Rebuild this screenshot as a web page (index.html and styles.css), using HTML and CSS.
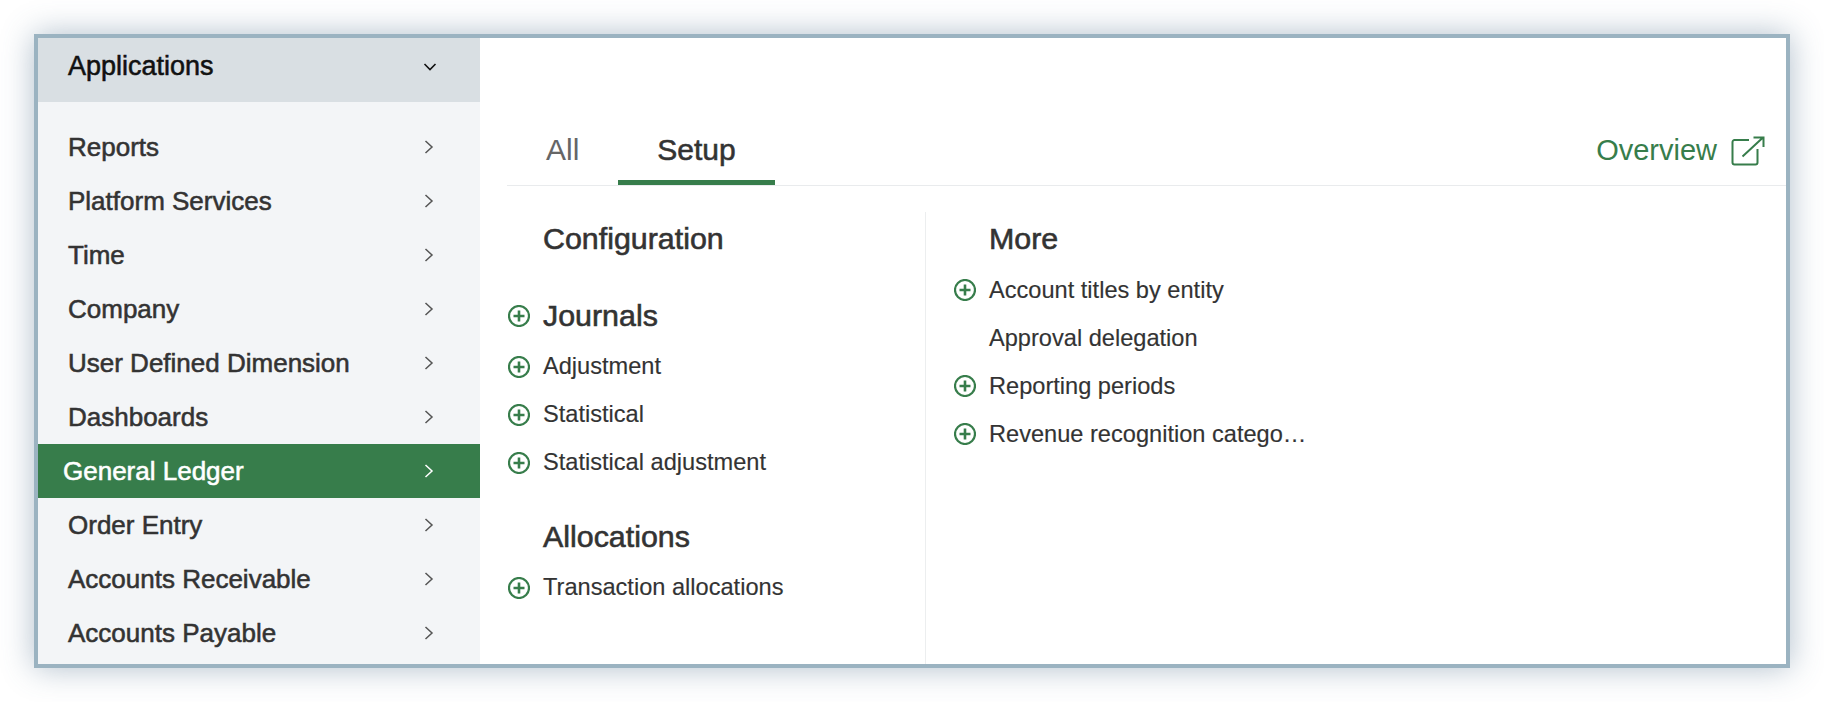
FILE: index.html
```html
<!DOCTYPE html>
<html lang="en">
<head>
  <meta charset="UTF-8" />
  <title>Applications</title>
  <link rel="stylesheet" href="styles.css">
</head>
<body>

  <div class="frame">
    <!-- SIDEBAR -->
    <nav class="sidebar">
      <div class="side-head">
        <span>Applications</span>
        <svg class="chev-down" width="14" height="10" viewBox="0 0 14 10"><path d="M1.500 2l5.500 5.500L12.500 2"/></svg>
      </div>
      <ul class="side-list">
        <li class="side-item">Reports<svg class="chev" width="10" height="14" viewBox="0 0 10 14"><path d="M1.500 1l6.500 6-6.500 6"/></svg></li>
        <li class="side-item">Platform Services<svg class="chev" width="10" height="14" viewBox="0 0 10 14"><path d="M1.500 1l6.500 6-6.500 6"/></svg></li>
        <li class="side-item">Time<svg class="chev" width="10" height="14" viewBox="0 0 10 14"><path d="M1.500 1l6.500 6-6.500 6"/></svg></li>
        <li class="side-item">Company<svg class="chev" width="10" height="14" viewBox="0 0 10 14"><path d="M1.500 1l6.500 6-6.500 6"/></svg></li>
        <li class="side-item">User Defined Dimension<svg class="chev" width="10" height="14" viewBox="0 0 10 14"><path d="M1.500 1l6.500 6-6.500 6"/></svg></li>
        <li class="side-item">Dashboards<svg class="chev" width="10" height="14" viewBox="0 0 10 14"><path d="M1.500 1l6.500 6-6.500 6"/></svg></li>
        <li class="side-item active">General Ledger<svg class="chev" width="10" height="14" viewBox="0 0 10 14"><path d="M1.500 1l6.500 6-6.500 6"/></svg></li>
        <li class="side-item">Order Entry<svg class="chev" width="10" height="14" viewBox="0 0 10 14"><path d="M1.500 1l6.500 6-6.500 6"/></svg></li>
        <li class="side-item">Accounts Receivable<svg class="chev" width="10" height="14" viewBox="0 0 10 14"><path d="M1.500 1l6.500 6-6.500 6"/></svg></li>
        <li class="side-item">Accounts Payable<svg class="chev" width="10" height="14" viewBox="0 0 10 14"><path d="M1.500 1l6.500 6-6.500 6"/></svg></li>
      </ul>
    </nav>

    <!-- CONTENT -->
    <main class="content">
      <div class="tabs">
        <a class="tab">All</a>
        <a class="tab selected">Setup</a>
        <a class="overview">Overview
          <svg width="34" height="30" viewBox="0 0 34 30"><path d="M18 4H3.500A2 2 0 0 0 1.500 6v20.500a2 2 0 0 0 2 2h21a2 2 0 0 0 2-2V13M11.500 20.500L32 1.500M22.500 1.500H32.500V11"/></svg>
        </a>
      </div>

      <div class="columns">
        <section class="col col-left">
          <h3 class="heading"><span class="slot"></span>Configuration</h3>
          <h3 class="heading journals">
            <span class="slot"><svg class="plus" width="22" height="22" viewBox="0 0 22 22"><circle cx="11" cy="11" r="10"/><path d="M11 5.500v11M5.500 11h11"/></svg></span>Journals
          </h3>
          <div class="row"><span class="slot"><svg class="plus" width="22" height="22" viewBox="0 0 22 22"><circle cx="11" cy="11" r="10"/><path d="M11 5.500v11M5.500 11h11"/></svg></span>Adjustment</div>
          <div class="row"><span class="slot"><svg class="plus" width="22" height="22" viewBox="0 0 22 22"><circle cx="11" cy="11" r="10"/><path d="M11 5.500v11M5.500 11h11"/></svg></span>Statistical</div>
          <div class="row"><span class="slot"><svg class="plus" width="22" height="22" viewBox="0 0 22 22"><circle cx="11" cy="11" r="10"/><path d="M11 5.500v11M5.500 11h11"/></svg></span>Statistical adjustment</div>
          <h3 class="heading allocations"><span class="slot"></span>Allocations</h3>
          <div class="row"><span class="slot"><svg class="plus" width="22" height="22" viewBox="0 0 22 22"><circle cx="11" cy="11" r="10"/><path d="M11 5.500v11M5.500 11h11"/></svg></span>Transaction allocations</div>
        </section>

        <section class="col col-right">
          <h3 class="heading"><span class="slot"></span>More</h3>
          <div class="row"><span class="slot"><svg class="plus" width="22" height="22" viewBox="0 0 22 22"><circle cx="11" cy="11" r="10"/><path d="M11 5.500v11M5.500 11h11"/></svg></span>Account titles by entity</div>
          <div class="row"><span class="slot"></span>Approval delegation</div>
          <div class="row"><span class="slot"><svg class="plus" width="22" height="22" viewBox="0 0 22 22"><circle cx="11" cy="11" r="10"/><path d="M11 5.500v11M5.500 11h11"/></svg></span>Reporting periods</div>
          <div class="row"><span class="slot"><svg class="plus" width="22" height="22" viewBox="0 0 22 22"><circle cx="11" cy="11" r="10"/><path d="M11 5.500v11M5.500 11h11"/></svg></span>Revenue recognition catego…</div>
        </section>
      </div>
    </main>
  </div>

</body>
</html>
```

FILE: styles.css
```css
* {
  box-sizing: border-box;
  margin: 0;
  padding: 0;
}
body {
  background: #fff;
  font-family: "Liberation Sans", Arial, sans-serif;
  color: #333;
  height: 702px;
  overflow: hidden;
}

/* === FRAME === */
.frame {
  display: flex;
  width: 1756px;
  height: 634px;
  margin: 34px 0 0 34px;
  background: #fff;
  border: 4px solid #9bb3c1;
  box-shadow: 0 0 30px rgba(80, 110, 140, 0.45);
}

/* === SIDEBAR === */
.sidebar {
  width: 442px;
  flex-shrink: 0;
  background: #f3f5f7;
  overflow: hidden;
}
.side-head {
  display: flex;
  align-items: center;
  justify-content: space-between;
  width: 443px;
  height: 64px;
  padding: 0 44px 7px 30px;
  background: #d9dfe3;
  color: #111;
  font-size: 27px;
  -webkit-text-stroke: 0.55px #111;
}
.side-list {
  list-style: none;
  padding-top: 18px;
}
.side-item {
  display: flex;
  align-items: center;
  justify-content: space-between;
  height: 54px;
  padding: 0 46px 0 30px;
  font-size: 26px;
  -webkit-text-stroke: 0.55px #333;
}
.side-item.active {
  padding-left: 25px;
  background: #377d4b;
  color: #fff;
  -webkit-text-stroke: 0.55px #fff;
}
.chev, .chev-down {
  fill: none;
  stroke: #555;
  stroke-width: 1.5;
}
.chev-down {
  stroke: #111;
  stroke-width: 1.6;
}
.active .chev {
  stroke: #fff;
}

/* === CONTENT === */
.content {
  flex: 1;
  display: flex;
  flex-direction: column;
  padding-left: 27px;
}
.tabs {
  display: flex;
  align-items: flex-end;
  height: 148px;
  border-bottom: 1px solid #e9ebed;
}
.tab {
  height: 58px;
  padding: 0 39px;
  font-size: 30px;
  line-height: 46px;
  color: #666;
}
.tab.selected {
  color: #333;
  border-bottom: 5px solid #377d4b;
  -webkit-text-stroke: 0.55px #333;
}
.overview {
  display: flex;
  align-items: center;
  gap: 14px;
  margin-left: auto;
  padding: 0 21px 18px 0;
  color: #377d4b;
  font-size: 29px;
}
.overview svg {
  fill: none;
  stroke: #377d4b;
  stroke-width: 2;
}

.columns {
  flex: 1;
  display: flex;
  padding-top: 26px;
}
.col-left {
  width: 419px;
  border-right: 1px solid #eceeef;
}
.col-right {
  padding-left: 27px;
}
.heading {
  display: flex;
  align-items: center;
  height: 48px;
  margin-top: 2px;
  margin-bottom: 3px;
  font-size: 30.400px;
  font-weight: normal;
  -webkit-text-stroke: 0.6px #333;
}
.col-right .heading {
  margin-bottom: 4px;
}
.journals {
  margin-top: 29.500px;
}
.allocations {
  margin-top: 26px;
}
.row {
  display: flex;
  align-items: center;
  height: 48px;
  font-size: 23.600px;
  -webkit-text-stroke: 0.15px #333;
}
.slot {
  display: flex;
  align-items: center;
  width: 36px;
  flex-shrink: 0;
  padding-left: 1px;
}
.plus {
  fill: none;
  stroke: #377d4b;
  stroke-width: 2.200;
}
.plus path {
  stroke-width: 2.600;
}
```
